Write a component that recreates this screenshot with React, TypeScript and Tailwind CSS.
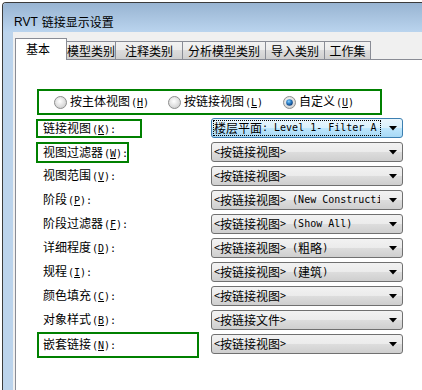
import React from 'react';

const CJKF = "font-['Liberation_Sans','Noto_Sans_CJK_SC',sans-serif]";

function Txt({ s }: { s: string }) {
  const parts = s.match(/[\x00-\x7f]+|[^\x00-\x7f]+/g) || [];
  return (
    <>
      {parts.map((p, i) =>
        /^[\x00-\x7f]/.test(p) ? (
          <span key={i} className="font-['DejaVu_Sans_Mono',monospace] text-[10px] whitespace-pre">
            {p}
          </span>
        ) : (
          <span key={i} className="font-['Noto_Sans_CJK_SC',sans-serif] text-[12px]">
            {p}
          </span>
        )
      )}
    </>
  );
}

function Mn({ label, k, colon = true }: { label: string; k: string; colon?: boolean }) {
  return (
    <span className="whitespace-nowrap leading-[14px]">
      <span className="font-['Noto_Sans_CJK_SC',sans-serif] text-[12px]">{label}</span>
      <span className="font-['DejaVu_Sans_Mono',monospace] text-[10px] ml-[1px]">
        (<u>{k}</u>){colon ? ':' : ''}
      </span>
    </span>
  );
}

function Arrow() {
  return (
    <svg width="8" height="5" viewBox="0 0 8 5" className="shrink-0">
      <polygon points="0,0 8,0 4,4.5" fill="#000" />
    </svg>
  );
}

function Dropdown({ value, focused }: { value: string; focused?: boolean }) {
  return (
    <div
      className={`w-[192px] h-[20px] rounded-[3px] border flex items-center pl-[1px] pr-[5px] ${
        focused
          ? 'border-[#3c7fb1] bg-[linear-gradient(#eaf6fd_0%,#d9f0fc_50%,#bee6fd_50%,#a7d9f5_100%)]'
          : 'border-[#707070] bg-[linear-gradient(#f2f2f2_0%,#ebebeb_50%,#dddddd_50%,#cfcfcf_100%)]'
      }`}
    >
      <div
        className={`flex-1 h-[16px] overflow-hidden whitespace-nowrap flex items-center leading-[14px] text-black ${
          focused ? 'border border-dotted border-black mr-[8px]' : 'border border-transparent mr-[8px]'
        }`}
      >
        <Txt s={value} />
      </div>
      <Arrow />
    </div>
  );
}

function Radio({ checked }: { checked?: boolean }) {
  return (
    <svg width="13" height="13" viewBox="0 0 13 13" className="shrink-0">
      <defs>
        <radialGradient id="rg" cx="0.45" cy="0.4" r="0.6">
          <stop offset="0" stopColor="#ffffff" />
          <stop offset="1" stopColor="#cfcfcf" />
        </radialGradient>
        <radialGradient id="rb" cx="0.4" cy="0.35" r="0.65">
          <stop offset="0" stopColor="#8fd3ff" />
          <stop offset="0.5" stopColor="#2c80c9" />
          <stop offset="1" stopColor="#0e3d7a" />
        </radialGradient>
      </defs>
      <circle cx="6.5" cy="6.5" r="6" fill="url(#rg)" stroke="#8e8f8f" strokeWidth="1" />
      {checked && <circle cx="6.5" cy="6.5" r="3.3" fill="url(#rb)" />}
    </svg>
  );
}

const rows: { label: string; k: string; value: string; focused?: boolean; box?: string }[] = [
  { label: '链接视图', k: 'K', value: '楼层平面: Level 1- Filter A', focused: true, box: 'k' },
  { label: '视图过滤器', k: 'W', value: '<按链接视图>', box: 'w' },
  { label: '视图范围', k: 'V', value: '<按链接视图>' },
  { label: '阶段', k: 'P', value: '<按链接视图> (New Constructi' },
  { label: '阶段过滤器', k: 'F', value: '<按链接视图> (Show All)' },
  { label: '详细程度', k: 'D', value: '<按链接视图> (粗略)' },
  { label: '规程', k: 'I', value: '<按链接视图> (建筑)' },
  { label: '颜色填充', k: 'C', value: '<按链接视图>' },
  { label: '对象样式', k: 'B', value: '<按链接文件>' },
  { label: '嵌套链接', k: 'N', value: '<按链接视图>', box: 'n' },
];

const tabs = [
  { t: '基本', w: 'w-[52px]' },
  { t: '模型类别', w: 'w-[50px]' },
  { t: '注释类别', w: 'w-[68px]' },
  { t: '分析模型类别', w: 'w-[84px]' },
  { t: '导入类别', w: 'w-[60px]' },
  { t: '工作集', w: 'w-[47px]' },
];

export default function App() {
  return (
    <div className={`w-[422px] h-[390px] bg-white overflow-hidden pt-[2px] pl-[2px] ${CJKF}`}>
      <div className="w-[440px] h-[400px] border-l border-t border-[#3b3b3b] rounded-tl-[4px] overflow-hidden flex flex-col">
        <div className="h-[29px] shrink-0 bg-[linear-gradient(#98b4d2,#bad4ee)] pl-[11px] pt-[9px] flex items-center text-[12px] text-black">
          <span className="font-['Liberation_Sans',sans-serif] text-[12px]">RVT</span>
          <span className="font-['Noto_Sans_CJK_SC',sans-serif] text-[12px] ml-[4px]">链接显示设置</span>
        </div>
        <div className="flex flex-1">
          <div className="w-[10px] shrink-0 bg-[#bcd4ec]" />
          <div className="flex-1 bg-[#f0f0f0] pl-[2px] pt-[6px] flex flex-col">
            <div className="flex items-end h-[21px]">
              {tabs.map((tab, i) =>
                i === 0 ? (
                  <div
                    key={i}
                    className={`${tab.w} bg-white border-l border-t border-r border-[#898c95] relative z-10 -mb-[1px] h-[22px] flex items-start justify-center pt-[3px] text-[12px] leading-[14px]`}
                  >
                    <span className="font-['Noto_Sans_CJK_SC',sans-serif] pr-[6px]">{tab.t}</span>
                  </div>
                ) : (
                  <div
                    key={i}
                    className={`${tab.w} h-[18px] -ml-[1px] bg-[linear-gradient(#f2f2f2_0%,#ebebeb_50%,#dddddd_50%,#cfcfcf_100%)] border-l border-t border-r border-[#898c95] flex items-center justify-center text-[12px] leading-[14px]`}
                  >
                    <span className="font-['Noto_Sans_CJK_SC',sans-serif]">{tab.t}</span>
                  </div>
                )
              )}
            </div>
            <div className="flex-1 bg-white border-l border-t border-[#898c95] pl-[21px] pt-[29px] flex flex-col">
              <div className="w-[345px] h-[26px] border-2 border-[#008000] flex items-center pl-[15px]">
                <div className="w-[114px] flex items-center gap-[3px]">
                  <Radio />
                  <Mn label="按主体视图" k="H" colon={false} />
                </div>
                <div className="w-[115px] flex items-center gap-[3px]">
                  <Radio />
                  <Mn label="按链接视图" k="L" colon={false} />
                </div>
                <div className="flex items-center gap-[3px]">
                  <Radio checked />
                  <Mn label="自定义" k="U" colon={false} />
                </div>
              </div>
              <div className="flex flex-col gap-[4px] mt-[3px]">
                {rows.map((r, i) => (
                  <div key={i} className="flex h-[20px] items-start">
                    <div className="w-[174px] shrink-0 h-[20px] relative">
                      {r.box === 'k' ? (
                        <div className="-ml-[1px] mt-[1px] w-[106px] h-[19px] border-2 border-[#008000] flex items-center pl-[5px]">
                          <Mn label={r.label} k={r.k} />
                        </div>
                      ) : r.box === 'w' ? (
                        <div className="-ml-[1px] w-[93px] h-[21px] border-2 border-[#008000] flex items-center pl-[5px]">
                          <Mn label={r.label} k={r.k} />
                        </div>
                      ) : r.box === 'n' ? (
                        <div className="-mt-[2px] w-[162px] h-[26px] border-2 border-[#008000] flex items-center pl-[4px]">
                          <Mn label={r.label} k={r.k} />
                        </div>
                      ) : (
                        <div className="h-[20px] flex items-center pl-[6px]">
                          <Mn label={r.label} k={r.k} />
                        </div>
                      )}
                    </div>
                    <Dropdown value={r.value} focused={r.focused} />
                  </div>
                ))}
              </div>
            </div>
          </div>
        </div>
      </div>
    </div>
  );
}
